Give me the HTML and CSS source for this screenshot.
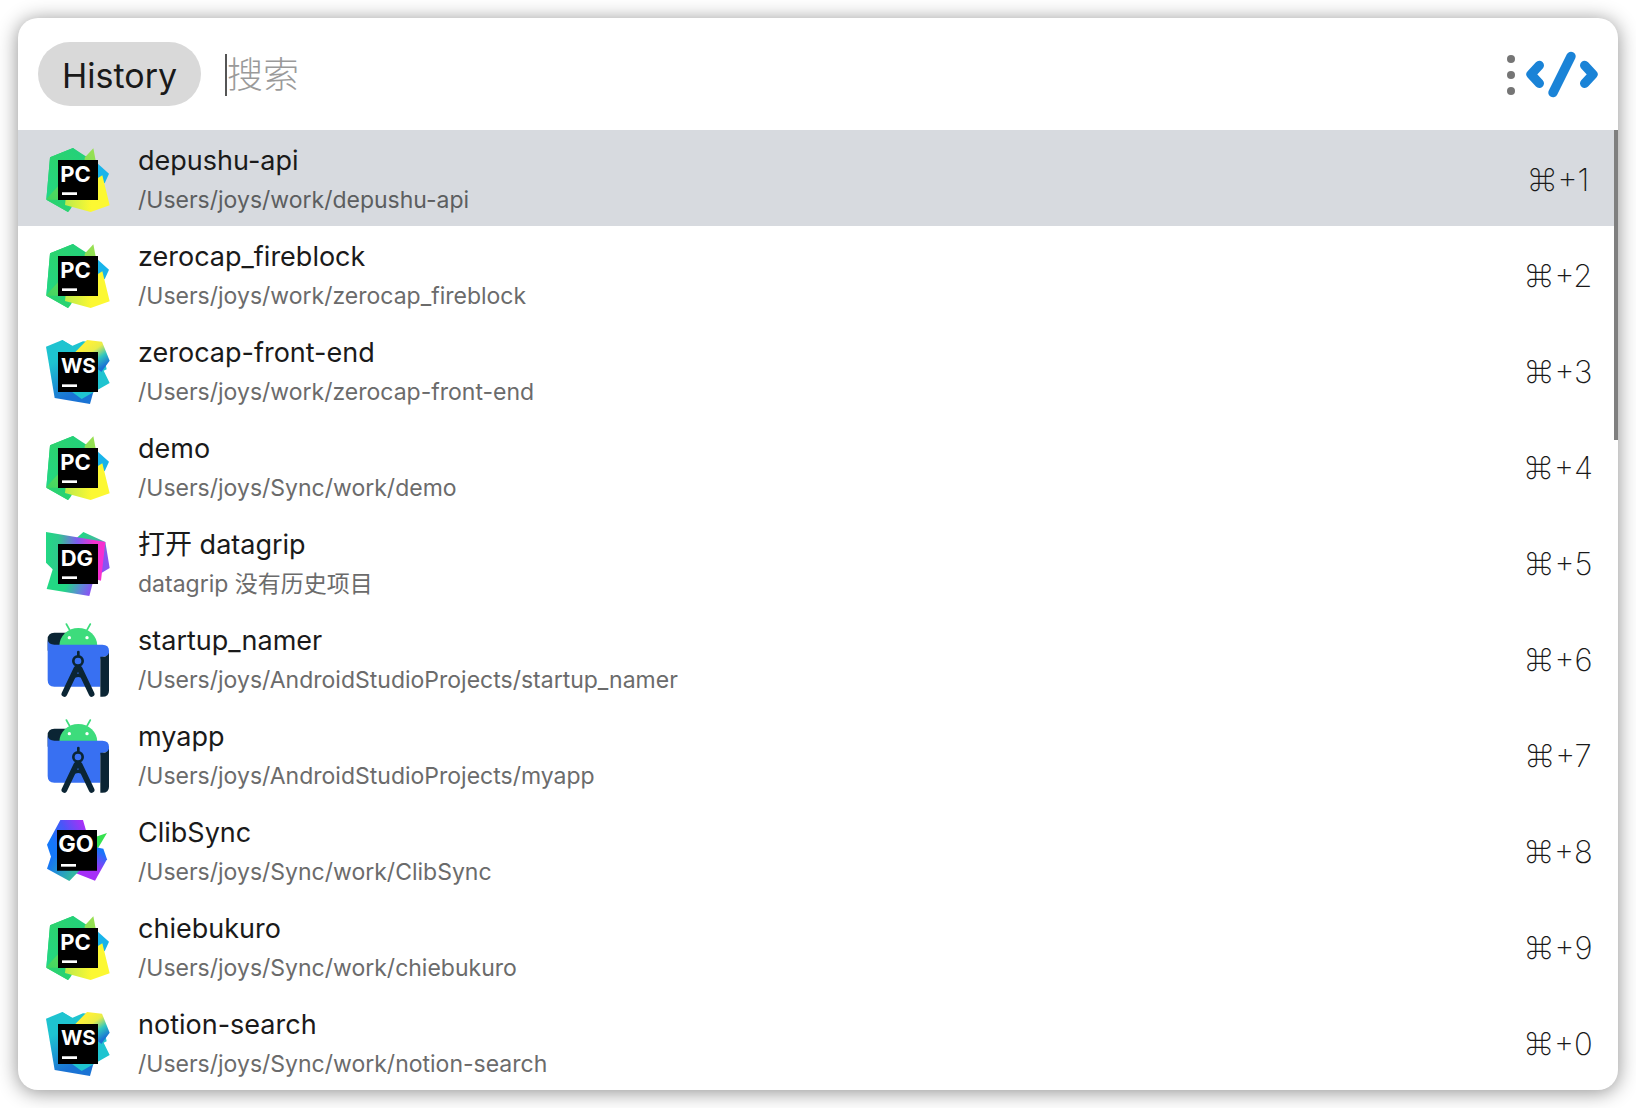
FILE: index.html
```html
<!DOCTYPE html>
<html lang="zh-CN">
<head>
<meta charset="utf-8">
<meta name="viewport" content="width=device-width, initial-scale=1">
<title>History</title>
<link rel="stylesheet" href="styles.css">
</head>
<body>
<svg class="sprite" aria-hidden="true">
  <defs>
    <linearGradient id="pc-a" x1="0" y1="1" x2="1" y2="0"><stop offset="0" stop-color="#21d789"/><stop offset=".5" stop-color="#2bd36f"/><stop offset="1" stop-color="#21d07d"/></linearGradient>
    <linearGradient id="pc-b" gradientUnits="userSpaceOnUse" x1="30" y1="190" x2="180" y2="60"><stop offset="0" stop-color="#3fd562"/><stop offset="1" stop-color="#97e052"/></linearGradient>
    <linearGradient id="pc-c" gradientUnits="userSpaceOnUse" x1="85" y1="190" x2="165" y2="190"><stop offset="0" stop-color="#b8ea4c"/><stop offset="1" stop-color="#fcf832"/></linearGradient>
    <linearGradient id="ws-a" gradientUnits="userSpaceOnUse" x1="60" y1="100" x2="120" y2="225"><stop offset="0" stop-color="#1ec3d0"/><stop offset=".8" stop-color="#1a73d4"/></linearGradient>
    <linearGradient id="ws-b" gradientUnits="userSpaceOnUse" x1="150" y1="42" x2="205" y2="120"><stop offset=".1" stop-color="#fcf03a"/><stop offset=".35" stop-color="#e9ec48"/><stop offset=".65" stop-color="#2fc6c0"/><stop offset=".95" stop-color="#1a73d4"/></linearGradient>
    <linearGradient id="dg-a" gradientUnits="userSpaceOnUse" x1="30" y1="90" x2="200" y2="90"><stop offset="0" stop-color="#22d884"/><stop offset=".22" stop-color="#2fc98d"/><stop offset=".55" stop-color="#7f5cf0"/><stop offset=".85" stop-color="#f62fd0"/></linearGradient>
    <linearGradient id="dg-b" gradientUnits="userSpaceOnUse" x1="135" y1="40" x2="220" y2="130"><stop offset="0" stop-color="#22d884"/><stop offset=".35" stop-color="#3fbc9c"/><stop offset=".8" stop-color="#8a52f2"/></linearGradient>
    <linearGradient id="dg-c" gradientUnits="userSpaceOnUse" x1="50" y1="160" x2="165" y2="215"><stop offset=".4" stop-color="#22d884"/><stop offset=".75" stop-color="#5f86d8"/><stop offset="1" stop-color="#8a50f4"/></linearGradient>
    <linearGradient id="go-a" gradientUnits="userSpaceOnUse" x1="35" y1="110" x2="150" y2="50"><stop offset=".1" stop-color="#1478fa"/><stop offset=".5" stop-color="#4b55f8"/><stop offset="1" stop-color="#b42cf6"/></linearGradient>
    <linearGradient id="go-b" gradientUnits="userSpaceOnUse" x1="40" y1="170" x2="125" y2="215"><stop offset="0" stop-color="#1675f6"/><stop offset=".8" stop-color="#31b6a4"/></linearGradient>
    <linearGradient id="go-c" gradientUnits="userSpaceOnUse" x1="205" y1="130" x2="150" y2="215"><stop offset=".1" stop-color="#1675fa"/><stop offset=".65" stop-color="#a62ff8"/></linearGradient>
    <g id="pycharm">
      <path fill="#18b4ea" d="M184 82 219 113 206 142 180 132z"/>
      <path fill="url(#pc-a)" d="M42 64 111 36 170 74 170 110 104 218 96 228 31 191z"/>
      <path fill="url(#pc-b)" d="M30 190 172 37 184 100 110 207 88 206z"/>
      <path fill="url(#pc-a)" d="M42 64 111 36 146 64 146 90 66 142 31 190z"/>
      <path fill="url(#pc-a)" d="M64 191 87 191 87 207 104 218 96 228 31 191z"/>
      <path fill="url(#pc-c)" d="M87 207 90 186 180 130 199 118 221 208 164 228z"/>
      <path d="M66 72h120v120H66z"/><path fill="#fff" d="M78 169h45v8H78z"/>
    </g>
    <g id="webstorm">
      <path fill="url(#ws-a)" d="M30 56 79 36 110 54 140 80 172 192 162 228 56 210z"/>
      <path fill="#1fc4d0" d="M79 36 108 54 141 40 195 44 212 124 203 128 221 165 137 213 100 186 60 60z"/>
      <path fill="url(#ws-b)" d="M115 75 153 36 198 41 221 98 196 132 170 110z"/>
      <path d="M66 72h120v120H66z"/><path fill="#fff" d="M78 169h45v8H78z"/>
    </g>
    <g id="datagrip">
      <path fill="url(#dg-b)" d="M122 54 142 36 208 66 221 144 195 160 170 120z"/>
      <path fill="url(#dg-c)" d="M52 142 32 207 160 228 171 186 100 130z"/>
      <path fill="url(#dg-a)" d="M30 36 208 66 195 182 180 178 90 160 52 150 30 128z"/>
      <path d="M66 72h120v120H66z"/><path fill="#fff" d="M78 169h45v8H78z"/>
    </g>
    <g id="goland">
      <path fill="#36e24f" d="M180 92 213 81 184 130z"/>
      <path fill="url(#go-c)" d="M180 124 202 128 213 160 177 224 120 202z"/>
      <path fill="url(#go-a)" d="M73 42 141 42 152 80 80 190 42 186 45 152 33 116z"/>
      <path fill="url(#go-b)" d="M45 152 33 188 100 225 130 194 70 160z"/>
      <path d="M63 72h120v122H63z"/><path fill="#fff" d="M75 174h45v8H75z"/>
    </g>
    <g id="android-studio">
      <path fill="#0b2534" d="M35 110V76q0-20 20-20h60v40H70z"/>
      <path stroke="#3ddc7c" stroke-width="5" stroke-linecap="round" d="M91 30 101 48M163 30 153 48"/>
      <path fill="#3ddc7c" d="M70 96a57 54 0 0 1 114 0z"/>
      <circle cx="100" cy="71" r="5" fill="#fff"/><circle cx="153" cy="71" r="5" fill="#fff"/>
      <path fill="#3870f2" d="M35 78q3 14 20 14H199q20 0 20 18v16q-26 0-26 12v80H55q-20 0-20-20z"/>
      <path fill="#0b2534" d="M193 128h8q14 0 18-12V230q0 18-20 18h-6z"/>
      <g fill="none" stroke="#0b2534" stroke-linecap="round">
        <path stroke-width="8" d="M127 114v12"/><circle cx="126" cy="141" r="14" stroke-width="8"/>
        <path stroke-width="17" stroke-linejoin="round" d="M85 240 121 164M167 240 131 164"/>
        <path stroke-width="10" d="M108 192q18-16 38 0"/>
      </g>
    </g>
  </defs>
</svg>

<main class="panel">
  <header class="toolbar">
    <button class="tag" type="button">History</button>
    <input class="search" type="text" placeholder="搜索" aria-label="搜索">
    <button class="icon-button" type="button" aria-label="菜单">
      <svg width="12" height="44" viewBox="0 0 12 44" fill="#757575"><circle cx="6" cy="6" r="4"/><circle cx="6" cy="22" r="4"/><circle cx="6" cy="38" r="4"/></svg>
    </button>
    <button class="icon-button" type="button" aria-label="插件">
      <svg width="72" height="48" viewBox="0 0 216 144" fill="none" stroke="#1a83d7" stroke-width="28" stroke-linecap="round" stroke-linejoin="round"><path d="M40 43 15 70 40 97M176 43 201 70 176 97M135 16 81 125"/></svg>
    </button>
  </header>

  <div class="results">
    <ul class="list" role="listbox" aria-label="History">
      <li class="row selected" role="option" aria-selected="true"><svg class="logo" viewBox="0 -18 270 288"><use href="#pycharm"/><text class="ide" x="73" y="138">PC</text></svg><div class="text"><div class="title">depushu-api</div><div class="path">/Users/joys/work/depushu-api</div></div><kbd class="key">⌘+1</kbd></li>
      <li class="row" role="option"><svg class="logo" viewBox="0 -18 270 288"><use href="#pycharm"/><text class="ide" x="73" y="138">PC</text></svg><div class="text"><div class="title">zerocap_fireblock</div><div class="path">/Users/joys/work/zerocap_fireblock</div></div><kbd class="key">⌘+2</kbd></li>
      <li class="row" role="option"><svg class="logo" viewBox="0 -18 270 288"><use href="#webstorm"/><text class="ide ide-small" x="75" y="136">WS</text></svg><div class="text"><div class="title">zerocap-front-end</div><div class="path">/Users/joys/work/zerocap-front-end</div></div><kbd class="key">⌘+3</kbd></li>
      <li class="row" role="option"><svg class="logo" viewBox="0 -18 270 288"><use href="#pycharm"/><text class="ide" x="73" y="138">PC</text></svg><div class="text"><div class="title">demo</div><div class="path">/Users/joys/Sync/work/demo</div></div><kbd class="key">⌘+4</kbd></li>
      <li class="row" role="option"><svg class="logo" viewBox="0 -18 270 288"><use href="#datagrip"/><text class="ide" x="74" y="138">DG</text></svg><div class="text"><div class="title">打开 datagrip</div><div class="path">datagrip 没有历史项目</div></div><kbd class="key">⌘+5</kbd></li>
      <li class="row" role="option"><svg class="logo" viewBox="0 -12 270 288"><use href="#android-studio"/></svg><div class="text"><div class="title">startup_namer</div><div class="path">/Users/joys/AndroidStudioProjects/startup_namer</div></div><kbd class="key">⌘+6</kbd></li>
      <li class="row" role="option"><svg class="logo" viewBox="0 -12 270 288"><use href="#android-studio"/></svg><div class="text"><div class="title">myapp</div><div class="path">/Users/joys/AndroidStudioProjects/myapp</div></div><kbd class="key">⌘+7</kbd></li>
      <li class="row" role="option"><svg class="logo" viewBox="0 -12 270 288"><use href="#goland"/><text class="ide ide-large" x="67" y="138">GO</text></svg><div class="text"><div class="title">ClibSync</div><div class="path">/Users/joys/Sync/work/ClibSync</div></div><kbd class="key">⌘+8</kbd></li>
      <li class="row" role="option"><svg class="logo" viewBox="0 -18 270 288"><use href="#pycharm"/><text class="ide" x="73" y="138">PC</text></svg><div class="text"><div class="title">chiebukuro</div><div class="path">/Users/joys/Sync/work/chiebukuro</div></div><kbd class="key">⌘+9</kbd></li>
      <li class="row" role="option"><svg class="logo" viewBox="0 -18 270 288"><use href="#webstorm"/><text class="ide ide-small" x="75" y="136">WS</text></svg><div class="text"><div class="title">notion-search</div><div class="path">/Users/joys/Sync/work/notion-search</div></div><kbd class="key">⌘+0</kbd></li>
    </ul>
    <div class="scroll-thumb"></div>
  </div>
</main>
</body>
</html>
```
FILE: styles.css
```css
* { box-sizing: border-box; }

body {
  margin: 0;
  padding: 18px;
  background: #fff;
  color: #1a1a1a;
  font-family: Inter, "Noto Sans CJK SC", sans-serif;
}

.sprite {
  position: absolute;
  width: 0;
  height: 0;
}

.ide {
  fill: #fff;
  font: 700 66px Inter, sans-serif;
}

.ide-small { font-size: 62px; }

.ide-large { font-size: 70px; }

.panel {
  border-radius: 20px;
  overflow: hidden;
  background: #fff;
  box-shadow: 0 2px 20px rgba(0, 0, 0, 0.45);
}

.toolbar {
  display: flex;
  align-items: center;
  height: 112px;
  padding: 0 20px;
}

.tag {
  height: 64px;
  padding: 2px 24px 0;
  border: 0;
  border-radius: 32px;
  background: #d9d9d9;
  color: inherit;
  font: 400 34px Inter, sans-serif;
}

.search {
  flex: 1;
  min-width: 0;
  height: 42px;
  margin: 2px 0 0 24px;
  padding: 0;
  border: 0;
  border-left: 2px solid #555;
  outline: 0;
  background: none;
  color: inherit;
  font: 300 36px Inter, "Noto Sans CJK SC", sans-serif;
}

.search::placeholder {
  color: #9a9a9a;
  opacity: 1;
}

.icon-button {
  display: flex;
  padding: 2px 0 0;
  border: 0;
  background: none;
}

.icon-button + .icon-button { margin-left: 9px; }

.results { position: relative; }

.list {
  margin: 0;
  padding: 0;
  list-style: none;
}

.row {
  display: flex;
  align-items: center;
  height: 96px;
  padding: 0 20px 0 18px;
}

.selected { background: #d7dadf; }

.logo {
  flex: none;
  width: 90px;
  height: 96px;
}

.text {
  flex: 1;
  min-width: 0;
  padding: 10px 0 6px 12px;
  white-space: nowrap;
}

.title {
  font-size: 27px;
  line-height: 40px;
}

.path {
  height: 38px;
  color: #6b6b6b;
  font-size: 23px;
  line-height: 38px;
}

.selected .path { color: #5c5e60; }

.key {
  width: 80px;
  padding-top: 2px;
  font: 200 31px Inter, "DejaVu Sans", sans-serif;
  text-align: center;
  white-space: nowrap;
}

.scroll-thumb {
  position: absolute;
  top: 0;
  right: 0;
  width: 4px;
  height: 310px;
  background: #7f7f7f;
}
```
